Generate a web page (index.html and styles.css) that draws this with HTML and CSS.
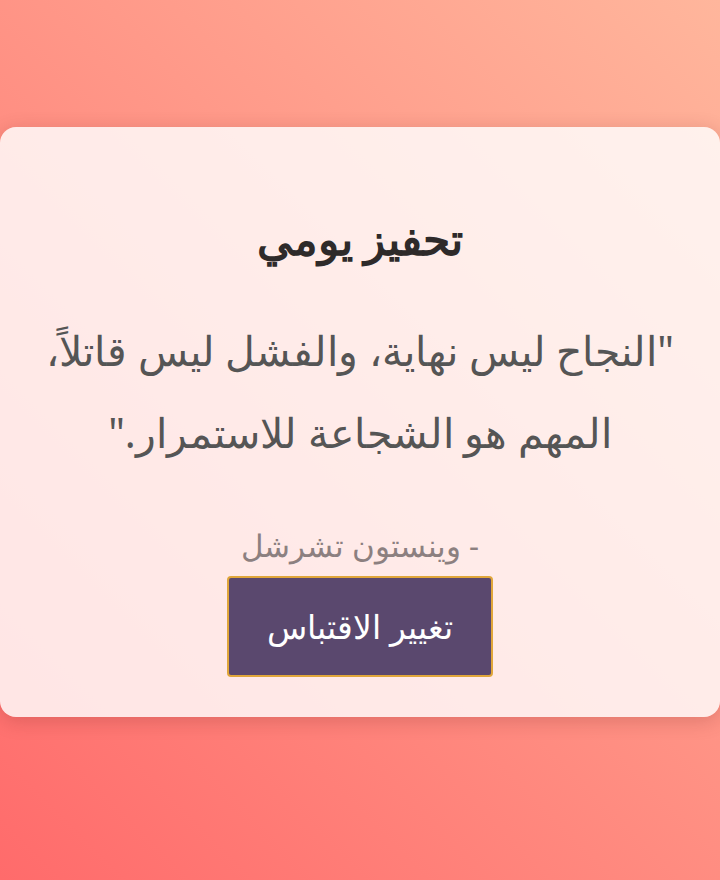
FILE: index.html
```html
<!DOCTYPE html>
<html lang="ar" dir="rtl">
<head>
<meta charset="utf-8">
<title>تحفيز يومي</title>
<link rel="stylesheet" href="styles.css">
</head>
<body>
<main class="page">
  <section class="card">
    <h1 class="title">تحفيز يومي</h1>
    <p class="quote">"النجاح ليس نهاية، والفشل ليس قاتلاً، المهم هو الشجاعة للاستمرار."</p>
    <p class="author">- وينستون تشرشل</p>
    <button class="btn" type="button">تغيير الاقتباس</button>
  </section>
</main>
</body>
</html>
```
FILE: styles.css
```css
html, body {
  margin: 0;
  padding: 0;
}
body {
  width: 720px;
  height: 880px;
  font-family: "Noto Sans", sans-serif;
  background: linear-gradient(45deg, #ff6b6b 0%, #ffb69c 100%);
}
.page {
  box-sizing: border-box;
  height: 880px;
  padding-top: 127px;
}
.card {
  box-sizing: border-box;
  height: 590px;
  background: rgba(255, 255, 255, 0.82);
  border-radius: 16px;
  box-shadow: 0 4px 20px rgba(90, 20, 20, 0.2);
  display: flex;
  flex-direction: column;
  align-items: center;
  padding: 87px 30px 0;
  text-align: center;
}
.title {
  margin: 0;
  font-size: 44px;
  font-weight: bold;
  line-height: 48px;
  color: #2e2a2a;
}
.quote {
  margin: 47px 0 0;
  font-size: 41px;
  line-height: 82px;
  color: #555;
}
.author {
  margin: 52px 0 0;
  font-size: 31px;
  line-height: 40px;
  color: #8c8080;
}
.btn {
  margin-top: 11px;
  width: 266px;
  height: 101px;
  font-family: "Noto Sans", sans-serif;
  font-size: 33px;
  color: #fff;
  background: #5a486e;
  border: 2px solid #e0a63a;
  border-radius: 4px;
}
```
